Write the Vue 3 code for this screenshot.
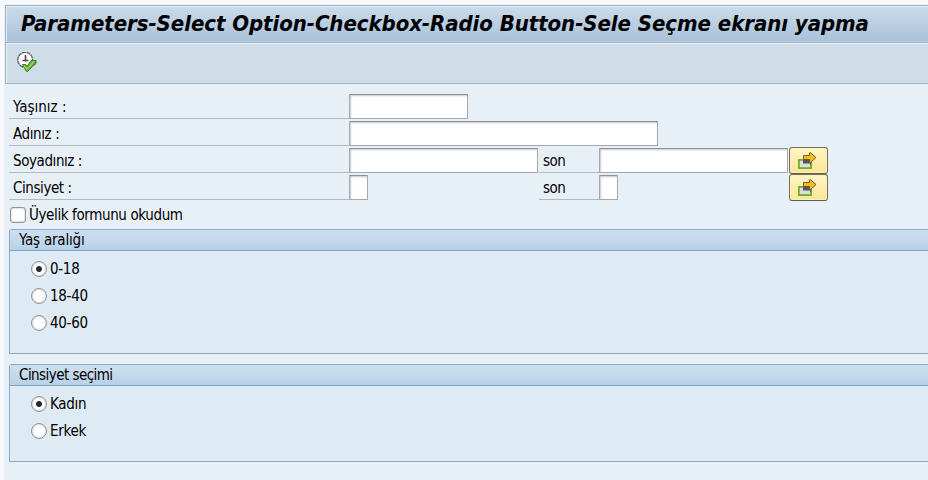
<script setup>
const rows = [
  { label: 'Yaşınız :', width: 119, spacing: 0 },
  { label: 'Adınız :', width: 309, spacing: -0.4 },
  { label: 'Soyadınız :', width: 189, to: 189, spacing: -0.42 },
  { label: 'Cinsiyet :', width: 19, to: 19, spacing: -0.42 },
]
const groups = [
  { title: 'Yaş aralığı', name: 'age', height: 125, spacing: -0.2, options: ['0-18', '18-40', '40-60'] },
  { title: 'Cinsiyet seçimi', name: 'gender', height: 98, spacing: -0.55, options: ['Kadın', 'Erkek'] },
]
</script>

<template>
  <div class="screen">
    <div class="window">
      <header>
        <h1><span>Parameters-Select Option-Checkbox-Radio Button-Sele Seçme ekranı yapma</span></h1>
        <div class="toolbar">
          <svg width="22" height="22" viewBox="0 0 22 22">
            <circle cx="8.200" cy="7.800" r="7.400" fill="#fff" stroke="#5d6266" stroke-width="1.400" stroke-dasharray="4 .5" />
            <path d="M8.500 3v6.500M5.500 8.500h6" fill="none" stroke="#4a4a4a" stroke-width="1.600" />
            <path d="M5.500 12.500h3l1.500 2 4-6h5v3l-3.500 3-5 5h-1z" fill="#5cae32" stroke="#3c7f22" />
            <path d="M7 14l3 3 3-3 4-5" fill="none" stroke="#97d766" stroke-width="1.300" />
          </svg>
        </div>
      </header>
      <main>
        <div v-for="r in rows" :key="r.label" class="row">
          <span class="label" :style="{ letterSpacing: r.spacing + 'px' }">{{ r.label }}</span>
          <span class="from"><input :style="{ width: r.width + 'px' }" /></span>
          <template v-if="r.to">
            <span class="son">son</span>
            <span class="to"><input :style="{ width: r.to + 'px' }" /></span>
            <button>
              <svg width="21" height="18" viewBox="0 0 21 18">
                <rect x="1.900" y="7.900" width="12.200" height="8.200" fill="#dcdde0" stroke="#69ad1e" stroke-width="1.700" />
                <path d="M6 7.500h8v5l-1 1v-2H6z" fill="#54555a" />
                <path d="M6.500 3.500h6V.8h1l5.500 4.700-5.500 5h-1V7.500h-6z" fill="#fdbb12" stroke="#5b5136" stroke-width=".9" />
              </svg>
            </button>
          </template>
        </div>
        <label class="check"><i></i><span>Üyelik formunu okudum</span></label>
        <section v-for="g in groups" :key="g.name" :style="{ height: g.height + 'px' }">
          <h2 :style="{ letterSpacing: g.spacing + 'px' }">{{ g.title }}</h2>
          <div class="options">
            <label v-for="(o, i) in g.options" :key="o"><i :class="{ on: i === 0 }"></i><span>{{ o }}</span></label>
          </div>
        </section>
      </main>
    </div>
  </div>
</template>

<style>
body { overflow: hidden; }
</style>
<style scoped>
* { box-sizing: border-box; }
.screen { width: 928px; height: 480px; padding: 4px 0 0 4px; background: #f8f9fd; overflow: hidden;
  font: 15px/18px "DejaVu Sans Condensed", "DejaVu Sans", sans-serif; font-stretch: condensed; color: #000; }
.window { height: 476px; background: #e8f0f7; padding: 1px 0 0 1px; }
header { height: 79px; border: solid #a2b3c6; border-width: 1px 0 1px 1px; background: #cfdde8; }
h1 { margin: 0; height: 37px; padding: 6px 0 0 15px; border-bottom: 1px solid #9fb4cb; font-size: 22px; line-height: 24px; font-style: italic; font-weight: bold; letter-spacing: -.06px;
  white-space: nowrap; background: linear-gradient(#cbdcea, #a9c1d9); box-shadow: inset 1px 1px #e0ebf4, inset 0 -1px #b9cde0; }
.toolbar { height: 40px; padding: 9px 0 0 11px; box-shadow: inset 1px 1px #e9f2f8; }
svg { display: block; }
main { padding: 10px 0 0 4px; }
.row { display: flex; height: 27px; }
.label, .from, .son, .to { height: 25px; border-bottom: 1px solid #b5b8bc; flex: none; }
.label { width: 340px; padding: 4px 0 0 4px; }
.from { width: 190px; border: 0; }
.son { width: 60px; padding: 4px 0 0 4px; letter-spacing: -.5px; }
.to { width: 190px; border: 0; }
input { display: block; height: 25px; padding: 0; border: 1px solid #a6a8ad; border-top-color: #8f9196; border-radius: 1px; background: #fff; box-shadow: inset 1px 1px 2px #c5c8ce; outline: 0; }
button { display: flex; width: 39px; height: 27px; margin-top: -1px; padding: 4px 0 0 7px; align-items: flex-start; border: 1px solid #77705f; border-bottom-color: #5f5b52; border-radius: 3px; background: linear-gradient(#fff5c6, #fbe597); box-shadow: inset 0 0 0 1px #fff1b4; }
.check { display: flex; height: 27px; padding: 5px 0 0 1px; letter-spacing: -.38px; }
.check i { width: 16px; height: 16px; margin-right: 3px; background: #fff; border: 1px solid #929598; border-radius: 3px; box-shadow: inset 0 0 2px #aaa; }
.check span { margin-top: -1px; }
section { border: 1px solid #89abc9; border-right: 0; border-radius: 3px 0 0 0; background: #dfebf4; margin-bottom: 10px; }
h2 { margin: 0; height: 21px; padding: 1px 0 0 9px; font-size: 15px; line-height: 18px; font-weight: normal; border-bottom: 1px solid #7fa3c6; background: linear-gradient(#cee0ef, #b8d1e7); }
.options { padding: 5px 0 0 21px; letter-spacing: -.3px; }
.options label { display: flex; height: 27px; padding-top: 5px; }
.options i { width: 16px; height: 16px; margin-right: 3px; background: #fff; border: 1px solid #929598; border-radius: 50%; box-shadow: inset 0 0 2px #aaa; }
.options i.on { background: radial-gradient(circle, #26283f 2.500px, #fff 3.500px); }
.options span { margin-top: -1px; }
</style>
